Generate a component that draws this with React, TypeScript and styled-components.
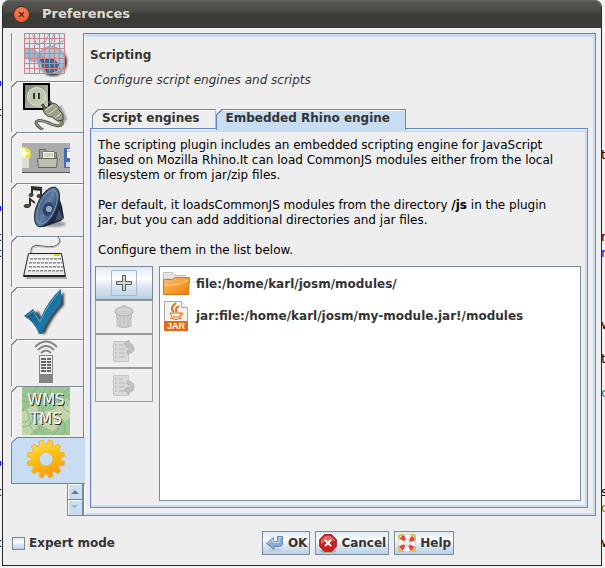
import React, { useState } from "react";
import styled, { createGlobalStyle, css } from "styled-components";

const edge = "#7a8a99";
const accent = "#6382bf";
const tint = "#c8ddf2";
const face = "#eeeeee";
const metal = "linear-gradient(#dde8f3 0%, #ffffff 35%, #dde8f3 60%, #b8cfe5 100%)";

const GlobalStyle = createGlobalStyle`
  *, *::before, *::after { box-sizing: border-box; }
  body { margin: 0; background: #f3f3f3; font: 12px/15px "DejaVu Sans", sans-serif; color: #000; }
  button { font: inherit; color: inherit; margin: 0; padding: 0; cursor: default; }
  p, h1, h2 { margin: 0; }
  svg { display: block; flex: none; }
`;

const Desktop = styled.div`
  position: relative;
  min-height: 100vh;
  display: flex;
  padding: 0 3px 2px 2px;
  overflow: hidden;
`;

const Behind = styled.span<{ $side: "left" | "right"; $top: number; $color?: string }>`
  position: absolute;
  top: ${(p) => p.$top}px;
  ${(p) => (p.$side === "left" ? "right: calc(100% - 2px);" : "left: calc(100% - 4px);")}
  font-size: 13px;
  line-height: 16px;
  color: ${(p) => p.$color ?? "#000"};
`;

const Window = styled.main`
  position: relative;
  flex: 1;
  min-width: 0;
  display: flex;
  flex-direction: column;
  border: 1px solid #2b2829;
  border-top: 0;
  border-radius: 7px 7px 0 0;
  background: ${face};
  overflow: hidden;
`;

const TitleBar = styled.header`
  height: 28px;
  display: flex;
  align-items: center;
  gap: 13px;
  padding-left: 11px;
  background: linear-gradient(#686762 0, #55544f 2px, #4a4944 12px, #3d3c38 14px, #3c3b37 100%);
`;

const CloseButton = styled.button`
  width: 15px;
  height: 15px;
  border: 0;
  border-radius: 50%;
  background: radial-gradient(circle at 50% 30%, #f98259, #ef5c2b 80%);
  box-shadow: 0 0 0 1px #37352f;
`;

const WindowTitle = styled.h1`
  font: bold 13px/20px "DejaVu Sans", sans-serif;
  color: #dfdbd2;
`;

const Body = styled.div`
  flex: 1;
  min-height: 0;
  display: flex;
  padding: 5px 5px 0 8px;
`;

const Rail = styled.nav`
  width: 72px;
  flex: none;
  display: flex;
  flex-direction: column;
`;

const RailTab = styled.button<{ $height: number; $active?: boolean; $cut?: boolean }>`
  position: relative;
  z-index: ${(p) => (p.$active ? 2 : 0)};
  height: ${(p) => p.$height}px;
  width: ${(p) => (p.$active ? 74 : 72)}px;
  padding: ${(p) => (p.$cut ? 0 : 1)}px 0 0 ${(p) => (p.$active ? 10 : 11)}px;
  display: flex;
  align-items: flex-start;
  border: 0;
  background: linear-gradient(135deg, transparent 4px, ${edge} 4px, ${edge} 5px, transparent 5px) 0 0 / 7px 7px no-repeat,
    linear-gradient(${edge}, ${edge}) 0 6px / 1px 100% no-repeat,
    linear-gradient(${edge}, ${edge}) 5px 0 / 100% 1px no-repeat,
    linear-gradient(#fff, #fff) 5px 1px / 100% 1px no-repeat,
    linear-gradient(#fff, #fff) 1px 6px / 1px 100% no-repeat;
  ${(p) => p.$cut && css`
    background: linear-gradient(${edge}, ${edge}) 0 0 / 1px 100% no-repeat,
      linear-gradient(#fff, #fff) 1px 0 / 1px 100% no-repeat;
  `}
  ${(p) => p.$active && css`
    background: linear-gradient(135deg, transparent 4px, ${accent} 4px, ${accent} 5px, transparent 5px) -1px 0 / 7px 7px no-repeat,
      linear-gradient(${accent}, ${accent}) 5px 0 / 67px 1px no-repeat, ${tint};
    border-left: 1px solid ${accent};
    border-bottom: 1px solid ${accent};
    clip-path: polygon(0 6px, 6px 0, 100% 0, 100% 100%, 0 100%);
  `}
`;

const Scroller = styled.div`
  align-self: flex-end;
  width: 16px;
  border: 1px solid ${edge};
  border-top: 0;
  background: ${tint};
`;

const ScrollButton = styled.button`
  width: 14px;
  height: 16px;
  display: flex;
  align-items: center;
  justify-content: center;
  border: 0;
  border-bottom: 1px solid ${accent};
  background: ${tint};
  box-shadow: inset 1px 1px #fff;
  &:last-child { border-bottom: 0; height: 15px; }
`;

const frame = css`
  border: 1px solid ${edge};
  border-top-color: ${accent};
  border-left-color: ${accent};
`;

const Panel = styled.section`
  ${frame}
  flex: 1;
  min-width: 0;
  display: flex;
  flex-direction: column;
  padding: 12px 7px 7px 6px;
  box-shadow: inset 1px 0 #fff, inset 0 3px ${tint}, inset -2px -2px ${tint};
`;

const Heading = styled.h2`
  font: bold 12px/18px "DejaVu Sans", sans-serif;
  color: #333;
`;

const Subtitle = styled.p`
  padding: 8px 0 0 4px;
  font-style: italic;
  line-height: 16px;
  color: #333;
`;

const TabRow = styled.div`
  display: flex;
  margin-top: 21px;
  padding-left: 2px;
`;

const Tab = styled.button<{ $active?: boolean }>`
  position: relative;
  z-index: 1;
  height: 19px;
  margin-bottom: ${(p) => (p.$active ? -2 : 0)}px;
  padding: 0 16px 0 10px;
  border: 0;
  font-weight: bold;
  line-height: 19px;
  color: #333;
  white-space: nowrap;
  --line: ${(p) => (p.$active ? accent : edge)};
  clip-path: polygon(0 6px, 6px 0, 100% 0, 100% 100%, 0 100%);
  background: linear-gradient(135deg, transparent 4px, var(--line) 4px, var(--line) 5px, transparent 5px) 0 0 / 7px 7px no-repeat,
    linear-gradient(var(--line), var(--line)) 0 6px / 1px 100% no-repeat,
    linear-gradient(var(--line), var(--line)) 5px 0 / 100% 1px no-repeat,
    linear-gradient(var(--line), var(--line)) 100% 0 / 1px 100% no-repeat,
    linear-gradient(#fff, #fff) 5px 1px / 100% 1px no-repeat,
    ${(p) => (p.$active ? tint : face)};
  ${(p) => p.$active && "height: 21px; padding-bottom: 2px;"}
`;

const InnerPanel = styled.div`
  ${frame}
  flex: 1;
  min-height: 0;
  display: flex;
  flex-direction: column;
  padding: 9px 6px 6px 4px;
  box-shadow: inset 0 1px #fff, inset 0 3px ${tint}, inset -2px -2px ${tint}, inset 1px 0 ${tint};
`;

const Prose = styled.div`
  display: flex;
  flex-direction: column;
  gap: 15px;
  padding: 0 0 8px 3px;
`;

const Editor = styled.div`
  flex: 1;
  display: flex;
  gap: 6px;
`;

const Tools = styled.div`
  width: 58px;
  flex: none;
`;

const Tool = styled.button`
  width: 58px;
  height: 34px;
  display: flex;
  align-items: center;
  justify-content: center;
  border: 1px solid ${edge};
  background: ${metal};
  &:disabled { border-color: #999; background: ${face}; }
`;

const PathList = styled.ul`
  flex: 1;
  margin: 0;
  padding: 1px 2px;
  list-style: none;
  background: #fff;
  border: 1px solid ${edge};
`;

const PathItem = styled.li`
  height: 32px;
  display: flex;
  align-items: center;
  gap: 5px;
  font-weight: bold;
  color: #333;
`;

const Footer = styled.footer`
  display: flex;
  align-items: center;
  padding: 15px 0 10px 9px;
  font-weight: bold;
  color: #333;
`;

const Expert = styled.label`
  display: flex;
  align-items: center;
  gap: 4px;
`;

const Check = styled.input`
  appearance: none;
  width: 13px;
  height: 13px;
  margin: 0;
  border: 1px solid ${edge};
  background: ${metal};
  &:checked { background: ${accent}; }
`;

const Actions = styled.div`
  flex: 1;
  display: flex;
  justify-content: center;
  gap: 5px;
`;

const Action = styled.button`
  height: 24px;
  display: flex;
  align-items: center;
  gap: 3px;
  padding: 0 2px;
  border: 1px solid ${edge};
  background: ${metal};
`;

const GridIcon = () => (
  <svg width="48" height="48" viewBox="0 0 48 48">
    <defs>
      <radialGradient id="globe"><stop stopColor="#5679a3" /><stop offset=".8" stopColor="#7696b9" /><stop offset="1" stopColor="#48515c" /></radialGradient>
      <filter id="soft"><feGaussianBlur stdDeviation="1" /></filter>
    </defs>
    <circle cx="31" cy="29" r="14" fill="#333" filter="url(#soft)" />
    <circle cx="29" cy="27" r="14" fill="url(#globe)" />
    <path fill="#d3e3ed" opacity=".6" d="M2 0h41v41H2z" />
    <path d="M2 16q8-3 14 3 5 2 8 7l-3 3H9L2 24z" fill="#7fa3c6" opacity=".7" />
    <path d="M18 26q8-2 14 0l5 5-2 7-9 3-6-7z" fill="#1f4b7c" opacity=".75" />
    <path d="M10 0l5 12 9-4 3-8M32 0l-4 14 15-7" fill="none" stroke="#9cadc0" />
    <path d="M2.500 0v40.500h40V.5h-40M7.500 0v40M12.500 0v40M17.500 0v40M22.500 0v40M27.500 0v40M32.500 0v40M37.500 0v40M2 5.500h41M2 10.500h41M2 15.500h41M2 20.500h41M2 25.500h41M2 30.500h41M2 35.500h41" fill="none" stroke="#c98688" />
  </svg>
);

const PlugIcon = () => (
  <svg width="48" height="48" viewBox="0 0 48 48">
    <defs>
      <linearGradient id="plate" x2="1" y2="1"><stop stopColor="#76856b" /><stop offset="1" stopColor="#cbd0be" /></linearGradient>
      <filter id="plugShade"><feGaussianBlur stdDeviation="1" /></filter>
    </defs>
    <path d="M2 2h25v25H2z" fill="url(#plate)" stroke="#000" strokeWidth="2" />
    <circle cx="14.500" cy="14.500" r="9" fill="#bfc6b1" stroke="#e3e7d9" />
    <path d="M12 11v6M17 11v6" stroke="#333a2f" strokeWidth="2" />
    <path d="M27 32l12-9 6 14-5 6z" fill="#999" filter="url(#plugShade)" />
    <path d="M38 37q4 4 1 6-5 2-12-2-12-5-13 0 1 3 7 7" fill="none" stroke="#525846" strokeWidth="3" />
    <path d="M38 37q4 4 1 6-5 2-12-2-12-5-13 0 1 3 7 7" fill="none" stroke="#b0b4a0" />
    <path d="M24 28l-4-6M31 24l-4-5" stroke="#515747" strokeWidth="3" />
    <path d="M21 28l10-7q6 1 6 7l4 4v6l-5 1-6-4q-7 0-9-7z" fill="#9ba08a" stroke="#474d3d" />
    <path d="M24 28l7-5M27 32l8-6M33 36l6-5" stroke="#dfe1d4" />
  </svg>
);

const ToolbarIcon = () => (
  <svg width="48" height="48" viewBox="0 -10 48 48">
    <path fill="#ababab" d="M0 0h48v30H0z" /><path fill="#555" d="M0 29h48v1H0z" />
    <circle cx="2" cy="11" r="7" fill="#ede339" /><path d="M0 14h7v11H0z" fill="#deded5" /><path d="M2 5l2 4 4 1-4 2-2 4-2-4V6z" fill="#fffef0" />
    <path d="M17.500 23V6.500h6l2 3h9V23" fill="#a1a493" stroke="#666957" /><path d="M20.500 8.500h12V20h-12z" fill="#f5f5f1" stroke="#777a6b" /><path d="M22 11h9M22 13h9" stroke="#abaea1" />
    <path d="M15.500 15.500h20l-1 9h-18z" fill="#bdc0af" stroke="#666957" />
    <path d="M42 5h6v20h-6z" fill="#3f71b0" /><path d="M45 6h3v9h-3z" fill="#fff" /><path d="M45 8h3" stroke="#da7749" /><path d="M44 19h4v5h-4z" fill="#d2d7dd" />
  </svg>
);

const AudioIcon = () => (
  <svg width="48" height="48" viewBox="0 0 48 48">
    <defs>
      <linearGradient id="cone" x2="1"><stop stopColor="#3e557a" /><stop offset=".5" stopColor="#6480a8" /><stop offset="1" stopColor="#293e61" /></linearGradient>
      <filter id="coneShade"><feGaussianBlur stdDeviation="1" /></filter>
    </defs>
    <ellipse cx="32" cy="40" rx="12" ry="3" fill="#999" filter="url(#coneShade)" />
    <path d="M33 2l7 20 2 12-3 3-17 6q-4 0-6-4z" fill="#1f2938" />
    <path d="M37 25l4 10-8 2z" fill="#3d5273" />
    <ellipse cx="25" cy="23" rx="10" ry="21" transform="rotate(24 25 23)" fill="url(#cone)" stroke="#1f2c42" />
    <ellipse cx="25" cy="23" rx="8" ry="18" transform="rotate(24 25 23)" fill="none" stroke="#7e97bb" />
    <ellipse cx="26" cy="25" rx="5" ry="7" transform="rotate(24 26 25)" fill="#2c436a" /><circle cx="27" cy="25" r="3" fill="#9aabc4" />
    <g fill="#555542" stroke="#31312a"><path d="M10 10V3l9 1v8M10 5l9 1M8 22v-7l5 4" fill="none" strokeWidth="2" /><ellipse cx="9" cy="11" rx="2" ry="1.500" /><ellipse cx="17" cy="12" rx="2" ry="1.500" /><ellipse cx="5" cy="22" rx="3" ry="1.500" /></g>
  </svg>
);

const KeyboardIcon = () => (
  <svg width="48" height="48" viewBox="0 2 48 48">
    <path d="M9 19q-2-11 11-8 16 3 18-5 0-4-5-5" fill="none" stroke="#555" /><path d="M10 19q-2-9 10-7 17 3 19-6" fill="none" stroke="#bbb" />
    <path d="M5 42h40v2H3z" fill="#aaa" /><path d="M6.500 18.500h33l4 23H1.500z" fill="#e9e9e6" stroke="#222" />
    <path d="M8 23h31M7 27h33M7 31h34M6 35h36" stroke="#8a8a87" strokeWidth="3" strokeDasharray="3 1" /><path d="M8 22h31M7 26h33M7 30h34M6 34h36" stroke="#fff" strokeWidth="2" strokeDasharray="3 1" />
    <path d="M32 20h6" stroke="#ddd124" strokeWidth="2" /><path d="M2 41h41" stroke="#222" strokeWidth="2" />
  </svg>
);

const CheckIcon = () => (
  <svg width="48" height="48" viewBox="0 0 48 48">
    <defs>
      <linearGradient id="tick" y2="1"><stop stopColor="#104369" /><stop offset=".65" stopColor="#1e78a8" /><stop offset="1" stopColor="#05304f" /></linearGradient>
      <filter id="tickShade"><feGaussianBlur stdDeviation="1" /></filter>
    </defs>
    <path d="M6 29l10-6 5 9Q31 13 42 4v13Q30 29 23 46h-3Q16 33 6 29z" fill="#444" filter="url(#tickShade)" />
    <path d="M2 28l9-7 7 10Q27 11 39 1v15Q27 28 20 46h-3Q12 33 2 28z" fill="url(#tick)" />
    <path d="M5 28l6-5 7 11Q27 14 37 5" fill="none" stroke="#61a8cd" />
  </svg>
);

const RemoteIcon = () => (
  <svg width="48" height="48" viewBox="0 2 48 48">
    <g fill="none" stroke="#858585" strokeWidth="2"><path d="M13 9q11-11 22 0M16 12q8-8 16 0M19 15q5-5 10 0" /></g>
    <path d="M17 17h14v28H17z" fill="#858585" /><path d="M18 18h12v18H18z" fill="#eee" /><path d="M19 21h5M25 21h4M19 24h5M25 24h4M19 27h5M25 27h4M19 30h5M25 30h4M19 33h5M25 33h4" stroke="#666" strokeWidth="2" />
  </svg>
);

const MapTile = styled.span`
  width: 48px;
  height: 48px;
  position: relative;
  color: #fff;
  text-shadow: 1px 1px #222;
  font-size: 15px;
  line-height: 19px;
  text-align: center;
  svg { position: absolute; inset: 0; }
  span { position: relative; display: block; padding-top: 4px; }
`;

const MapIcon = () => (
  <MapTile>
    <svg width="48" height="48" viewBox="0 0 48 48">
      <path fill="#9cc490" d="M0 0h48v48H0z" />
      <path fill="#c3d5aa" d="M0 25l13-8 6 9 14-4 10-12 5 4v17L30 44l-12-7L8 48H0z" />
      <g fill="none" stroke="#82b384"><path d="M0 8q10 6 15-8M0 14q18 5 24-14M48 7q-9 6-7 12t7 6M48 12q-5 2-2 7M12 16q10 6 0 14t4 18M17 15q9 12 1 16t5 17M28 0q-3 12 7 8t13-7M27 27q12-2 15 9t-5 12M31 31q8 0 6 8t-7 9M0 35q8 1 7-6T0 22M0 40q15-1 10-14" /></g>
    </svg>
    <span>WMS<br />TMS</span>
  </MapTile>
);

const gearPath = Array.from({ length: 12 }, (_, i) => {
  const at = (r: number, d: number) => {
    const a = ((i * 30 + d - 90) * Math.PI) / 180;
    return `${(24 + r * Math.cos(a)).toFixed(2)} ${(21 + r * Math.sin(a)).toFixed(2)}`;
  };
  return `${i ? "L" : "M"}${at(15, -10)}L${at(19, -6)}L${at(19, 6)}L${at(15, 10)}`;
}).join("");

const GearIcon = () => (
  <svg width="48" height="42" viewBox="0 0 48 42">
    <defs><linearGradient id="gold" x2=".7" y2="1"><stop stopColor="#ffe477" /><stop offset=".5" stopColor="#fdc30d" /><stop offset="1" stopColor="#f99412" /></linearGradient></defs>
    <path d={`${gearPath}ZM24 14a7 7 0 1 0 .01 0z`} transform="rotate(15 24 21)" fill="url(#gold)" fillRule="evenodd" stroke="#edb43b" strokeLinejoin="round" />
  </svg>
);

const PlusIcon = () => (
  <svg width="26" height="26" viewBox="0 0 26 26"><path d="M.5.500h25v25H.5z" fill="none" stroke="#a3b8cc" /><path d="M11.500 5.500h3v6h6v3h-6v6h-3v-6h-6v-3h6z" fill="#d4d4cf" stroke="#555752" /></svg>
);

const BinIcon = () => (
  <svg width="24" height="24" viewBox="0 0 24 24">
    <ellipse cx="12" cy="21" rx="9" ry="2" fill="#ddd" />
    <path d="M4.500 8.500h15l-1 12q-6 4-13 0z" fill="#d2d2d2" stroke="#b5b5b5" />
    <path d="M8 12v9M12 12v9M16 12v9" stroke="#b8b8b8" />
    <path d="M3 7q0-4 6-5 3-3 6 0 6 1 6 5-2 4-9 4T3 7z" fill="#cecece" stroke="#b0b0b0" /><path d="M6 6q6-4 12 0" fill="none" stroke="#ddd" />
  </svg>
);

const ScriptIcon = ({ down }: { down?: boolean }) => (
  <svg width="24" height="24" viewBox="0 0 24 24">
    <path d="M1.500 2.500h15v20h-15z" fill="#d9d9d9" stroke="#c6c6c6" />
    <path d="M3 6h2M7 6h4M3 10h2M7 10h6M3 14h2M7 14h6M3 18h2M7 18h6" stroke="#b5b5b5" />
    <path d={down ? "M15 8q7 0 7 6 0 5-5 5v3l-5-5 5-4v3q2 0 2-3 0-2-4-2z" : "M12 5l5-4v3q5 1 5 6 0 4-7 5v-3q4-1 4-3t-2-2v3z"} fill="#c0c0c0" stroke="#b5b5b5" />
  </svg>
);

const FolderIcon = () => (
  <svg width="29" height="28" viewBox="0 0 29 28">
    <defs><linearGradient id="folder" y2="1"><stop stopColor="#ffc36d" /><stop offset="1" stopColor="#ef7905" /></linearGradient></defs>
    <path d="M1.500 23V2.500h9l2 3h11V23" fill="#eee" stroke="#bbb" /><path d="M3 5h8M3 8h20" stroke="#ccc" />
    <path d="M1.500 24.500v-15h9l2-2h15l-1 17z" fill="url(#folder)" stroke="#d77919" /><path d="M3 15q14 1 23-5" fill="none" stroke="#ffd69b" />
  </svg>
);

const JarText = styled.text`
  font: bold 9px "Liberation Sans", sans-serif;
  fill: #fff;
`;

const JarIcon = () => (
  <svg width="29" height="32" viewBox="0 0 29 32">
    <path d="M2.500 1.500h17l6 6v23h-23z" fill="#f4f4f4" stroke="#aaa" /><path d="M19.500 1.500v6h6" fill="#fff" stroke="#aaa" />
    <path d="M2 21h24v10H2z" fill="#e56b13" />
    <path d="M14 3q-7 5-2 9M17 6q-5 3-2 6" fill="none" stroke="#e56b13" strokeWidth="2" />
    <path d="M8 13h11l-1 4H10zM19 13q5 0-1 3M8 18q6 3 12 0" fill="none" stroke="#e56b13" />
    <JarText x="5" y="29">JAR</JarText>
  </svg>
);

const EnterIcon = () => (
  <svg width="20" height="20" viewBox="0 0 20 20">
    <ellipse cx="10" cy="17" rx="7" ry="2" fill="#c7ced6" />
    <path d="M12.500 3.500h5v8q-1 2-3 2H9v3L1.500 10.500l7-6v4h4z" fill="#85abd8" stroke="#5e89b8" /><path d="M3 10.500l5-4v3h6v-5h2" fill="none" stroke="#c9dcf1" />
  </svg>
);

const StopIcon = () => (
  <svg width="20" height="20" viewBox="0 0 20 20">
    <ellipse cx="10" cy="18" rx="8" ry="2" fill="#aaa" />
    <path d="M6.500 1.500h7l5 5v7l-5 5h-7l-5-5v-7z" fill="#cc1f1f" stroke="#a33" /><path d="M3 9V7l4-4h6l4 4v1Q9 7 3 11z" fill="#df6868" />
    <path d="M7 7l6 6M13 7l-6 6" stroke="#fff" strokeWidth="2" />
  </svg>
);

const HelpIcon = () => (
  <svg width="20" height="20" viewBox="0 0 20 20">
    <path d="M2 7V3q0-1 1-1h4M13 2h4q1 0 1 1v4M18 13v4q0 1-1 1h-4M7 18H3q-1 0-1-1v-4" fill="none" stroke="#dcc055" strokeWidth="2" />
    <circle cx="10" cy="10" r="6" fill="none" stroke="#c4bdb6" strokeWidth="6" /><circle cx="10" cy="10" r="6" fill="none" stroke="#fafafa" strokeWidth="5" />
    <circle cx="10" cy="10" r="6" fill="none" stroke="#e5483f" strokeWidth="5" strokeDasharray="4 5.42" strokeDashoffset="-2.700" />
  </svg>
);

const sections = [
  { name: "Map projection", height: 48, Icon: GridIcon, cut: true },
  { name: "Plugins", height: 51, Icon: PlugIcon },
  { name: "Toolbar", height: 51, Icon: ToolbarIcon },
  { name: "Audio", height: 53, Icon: AudioIcon },
  { name: "Shortcuts", height: 51, Icon: KeyboardIcon },
  { name: "Validator", height: 52, Icon: CheckIcon },
  { name: "Remote control", height: 47, Icon: RemoteIcon },
  { name: "Imagery", height: 51, Icon: MapIcon },
  { name: "Scripting", height: 47, Icon: GearIcon },
];

const leftText: [number, string, string?][] = [[75, "o", "#00f"], [104, "c"], [200, "o", "#00f"], [229, "c"], [245, "c"], [455, "o", "#00f"], [484, "c"], [535, "c"]];
const rightText: [number, string, string?][] = [[147, "t"], [229, "n"], [245, "m", "#00f"], [317, "w"], [351, "t"], [385, "c", "#088"], [484, "s"], [500, "o", "#976b00"], [535, "w"]];

export default function App() {
  const [expert, setExpert] = useState(false);
  return (
    <>
      <GlobalStyle />
      <Desktop>
        {leftText.map(([top, text, color]) => <Behind key={top} $side="left" $top={top} $color={color}>{text}</Behind>)}
        {rightText.map(([top, text, color]) => <Behind key={top} $side="right" $top={top} $color={color}>{text}</Behind>)}
        <Window>
          <TitleBar>
            <CloseButton aria-label="Close">
              <svg width="15" height="15" viewBox="0 0 15 15"><path d="M5 5l5 5M10 5l-5 5" stroke="#4a2a1c" strokeWidth="1.300" /></svg>
            </CloseButton>
            <WindowTitle>Preferences</WindowTitle>
          </TitleBar>
          <Body>
            <Rail>
              {sections.map(({ name, height, Icon, cut }) => (
                <RailTab key={name} aria-label={name} $height={height} $cut={cut} $active={name === "Scripting"}><Icon /></RailTab>
              ))}
              <Scroller>
                <ScrollButton aria-label="Scroll up"><svg width="8" height="4" viewBox="0 0 8 4"><path d="M4 0l4 4H0z" fill="#6b7c8f" /></svg></ScrollButton>
                <ScrollButton aria-label="Scroll down"><svg width="8" height="5" viewBox="0 0 8 5"><path d="M0 0h8L4 4z" fill="#a3b8cc" /><path d="M8 0L4 4" stroke="#fff" /></svg></ScrollButton>
              </Scroller>
            </Rail>
            <Panel>
              <Heading>Scripting</Heading>
              <Subtitle>Configure script engines and scripts</Subtitle>
              <TabRow role="tablist">
                <Tab role="tab" aria-selected="false">Script engines</Tab>
                <Tab role="tab" aria-selected="true" $active>Embedded Rhino engine</Tab>
              </TabRow>
              <InnerPanel>
                <Prose>
                  <p>The scripting plugin includes an embedded scripting engine for JavaScript<br />based on Mozilla Rhino.It can load CommonJS modules either from the local<br />filesystem or from jar/zip files.</p>
                  <p>Per default, it loadsCommonJS modules from the directory <b>/js</b> in the plugin<br />jar, but you can add additional directories and jar files.</p>
                  <p>Configure them in the list below.</p>
                </Prose>
                <Editor>
                  <Tools>
                    <Tool aria-label="Add"><PlusIcon /></Tool>
                    <Tool aria-label="Delete" disabled><BinIcon /></Tool>
                    <Tool aria-label="Move up" disabled><ScriptIcon /></Tool>
                    <Tool aria-label="Move down" disabled><ScriptIcon down /></Tool>
                  </Tools>
                  <PathList>
                    <PathItem><FolderIcon />file:/home/karl/josm/modules/</PathItem>
                    <PathItem><JarIcon />jar:file:/home/karl/josm/my-module.jar!/modules</PathItem>
                  </PathList>
                </Editor>
              </InnerPanel>
            </Panel>
          </Body>
          <Footer>
            <Expert><Check type="checkbox" checked={expert} onChange={(e) => setExpert(e.target.checked)} />Expert mode</Expert>
            <Actions>
              <Action><EnterIcon />OK</Action>
              <Action><StopIcon />Cancel</Action>
              <Action><HelpIcon />Help</Action>
            </Actions>
          </Footer>
        </Window>
      </Desktop>
    </>
  );
}
